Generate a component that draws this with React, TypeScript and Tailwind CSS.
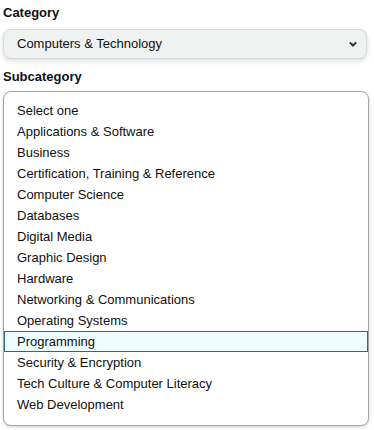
import React from "react";

const subcategories = [
  "Select one",
  "Applications & Software",
  "Business",
  "Certification, Training & Reference",
  "Computer Science",
  "Databases",
  "Digital Media",
  "Graphic Design",
  "Hardware",
  "Networking & Communications",
  "Operating Systems",
  "Programming",
  "Security & Encryption",
  "Tech Culture & Computer Literacy",
  "Web Development",
];

const App = () => {
  const selected = "Programming";

  return (
    <div
      className="w-[374px] h-[430px] bg-white text-[#0f1111] px-[3px] pt-[4px]"
      style={{ fontFamily: '"Liberation Sans", Arial, sans-serif' }}
    >
      <div className="text-[13px] font-bold leading-[18px]">Category</div>
      <div className="mt-[7px] flex h-[30px] w-[364px] items-center justify-between rounded-[8px] border border-[#d5d9d9] bg-[#f0f2f2] pl-[13px] pr-[7px] shadow-[0_2px_5px_rgba(15,17,17,0.15)]">
        <span className="text-[13px]">Computers &amp; Technology</span>
        <svg width="12" height="12" viewBox="0 0 12 12">
          <path
            d="M2.8 4.4 L6 7.5 L9.2 4.4"
            fill="none"
            stroke="#333"
            strokeWidth="2"
          />
        </svg>
      </div>
      <div className="mt-[9px] text-[13px] font-bold leading-[18px]">Subcategory</div>
      <div className="mt-[5px] w-[366px] rounded-[8px] border border-[#a6a6a6] bg-white pt-[8px] pb-[10px] shadow-[0_1px_3px_rgba(15,17,17,0.2)]">
        {subcategories.map((s) => (
          <div
            key={s}
            className={
              s === selected
                ? "h-[21px] border border-[#2e6b78] bg-[#edfdff] pl-[12px] text-[13px] leading-[19px]"
                : "h-[21px] pl-[13px] text-[13px] leading-[21px]"
            }
          >
            {s}
          </div>
        ))}
      </div>
    </div>
  );
};

export default App;
